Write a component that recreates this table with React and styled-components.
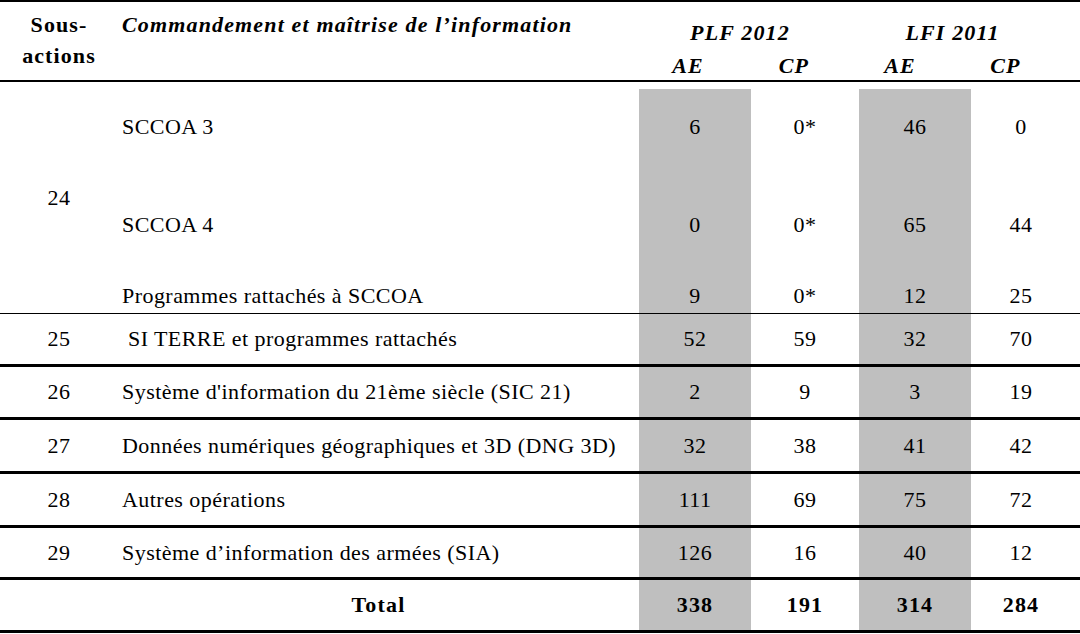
import React from 'react'
import styled, { createGlobalStyle } from 'styled-components'

const cols = '118px 521px 112px 108px 112px 1fr'
const shade = '#bfbfbf'

const Global = createGlobalStyle`
	body {
		margin: 0;
		background: #fff;
		color: #000;
		font-family: 'Liberation Serif', 'Times New Roman', serif;
	}
`

const Table = styled.div`
	width: 1080px;
	border-top: 2px solid #000;
	font-size: 22px;
	letter-spacing: 0.45px;
`

const Header = styled.div`
	display: grid;
	grid-template-columns: ${cols};
	grid-template-rows: 46px 32px;
	border-bottom: 2px solid #000;
	font-weight: bold;
	line-height: 31px;
`

const HeadCell = styled.div`
	grid-column: ${(p) => p.$col};
	grid-row: ${(p) => p.$row};
	padding-top: ${(p) => p.$top || 0}px;
	padding-right: ${(p) => p.$shift || 0}px;
	padding-left: ${(p) => p.$left || 0}px;
	text-align: ${(p) => (p.$left ? 'left' : 'center')};
	font-style: ${(p) => (p.$italic ? 'italic' : 'normal')};
	letter-spacing: ${(p) => (p.$italic ? '1.15px' : '1.1px')};
`

const Row = styled.div`
	display: grid;
	grid-template-columns: ${cols};
	height: ${(p) => p.$h}px;
	border-top: ${(p) => p.$line}px solid #000;
	font-weight: ${(p) => (p.$bold ? 'bold' : 'normal')};
	letter-spacing: ${(p) => (p.$bold ? '1.2px' : 'inherit')};
	&:last-child {
		border-bottom: 3px solid #000;
	}
`

const Block = styled(Row)`
	grid-template-rows: 90px 106px 35px;
`

const Cell = styled.div`
	display: flex;
	align-items: center;
	justify-content: ${(p) => (p.$left ? 'flex-start' : 'center')};
	padding-left: ${(p) => p.$left || 0}px;
	padding-right: ${(p) => p.$pr || 0}px;
	line-height: 24px;
	white-space: nowrap;
	background: ${(p) =>
		p.$shade ? (p.$inset ? `linear-gradient(to bottom, transparent 7px, ${shade} 7px)` : shade) : 'transparent'};
`

const SpanCell = styled(Cell)`
	grid-row: 1 / span 3;
`

const sccoa = [
	['SCCOA 3', '6', '0*', '46', '0'],
	['SCCOA 4', '0', '0*', '65', '44'],
	['Programmes rattachés à SCCOA', '9', '0*', '12', '25'],
]

const rows = [
	{ id: '25', label: '\u00a0SI TERRE et programmes rattachés', v: ['52', '59', '32', '70'], line: 1, h: 50 },
	{ id: '26', label: "Système d'information du 21ème siècle (SIC 21)", v: ['2', '9', '3', '19'], line: 3, h: 50 },
	{ id: '27', label: 'Données numériques géographiques et 3D (DNG 3D)', v: ['32', '38', '41', '42'], line: 3, h: 51 },
	{ id: '28', label: 'Autres opérations', v: ['111', '69', '75', '72'], line: 3, h: 51 },
	{ id: '29', label: 'Système d’information des armées (SIA)', v: ['126', '16', '40', '12'], line: 3, h: 49 },
]

function Values({ v, inset }) {
	return (
		<>
			<Cell $shade $inset={inset}>{v[0]}</Cell>
			<Cell>{v[1]}</Cell>
			<Cell $shade $inset={inset}>{v[2]}</Cell>
			<Cell $pr={9}>{v[3]}</Cell>
		</>
	)
}

export default function App() {
	return (
		<>
			<Global />
			<Table>
				<Header>
					<HeadCell $col="1" $row="1 / span 2" $top={7}>
						Sous-
						<br />
						actions
					</HeadCell>
					<HeadCell $col="2" $row="1 / span 2" $top={7} $left={4} $italic>
						Commandement et maîtrise de l’information
					</HeadCell>
					<HeadCell $col="3 / span 2" $row="1" $top={15} $shift={18} $italic>
						PLF 2012
					</HeadCell>
					<HeadCell $col="5 / span 2" $row="1" $top={15} $shift={34} $italic>
						LFI 2011
					</HeadCell>
					<HeadCell $col="3" $row="2" $top={2} $shift={14} $italic>
						AE
					</HeadCell>
					<HeadCell $col="4" $row="2" $top={2} $shift={22} $italic>
						CP
					</HeadCell>
					<HeadCell $col="5" $row="2" $top={2} $shift={30} $italic>
						AE
					</HeadCell>
					<HeadCell $col="6" $row="2" $top={2} $shift={40} $italic>
						CP
					</HeadCell>
				</Header>

				<Block $line={0} $h={231}>
					<SpanCell>24</SpanCell>
					{sccoa.map((r, i) => (
						<React.Fragment key={r[0]}>
							<Cell $left={4} style={{ gridColumn: 2 }}>
								{r[0]}
							</Cell>
							<Values v={r.slice(1)} inset={i === 0} />
						</React.Fragment>
					))}
				</Block>

				{rows.map((r) => (
					<Row key={r.id} $line={r.line} $h={r.h}>
						<Cell>{r.id}</Cell>
						<Cell $left={4}>{r.label}</Cell>
						<Values v={r.v} />
					</Row>
				))}

				<Row $line={3} $h={50} $bold>
					<Cell />
					<Cell>Total</Cell>
					<Values v={['338', '191', '314', '284']} />
				</Row>
			</Table>
		</>
	)
}
